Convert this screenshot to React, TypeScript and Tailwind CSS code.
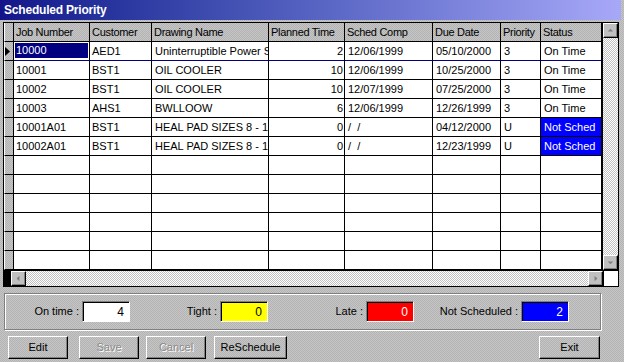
const dither =
  "bg-[image:repeating-conic-gradient(#c6c6c6_0_25%,#b3b3b3_0_50%)] bg-size-[2px_2px]";
const track =
  "bg-[image:repeating-conic-gradient(#c0c0c0_0_25%,#ffffff_0_50%)] bg-size-[2px_2px]";

const widths = [
  "w-[10px]",
  "w-[76px]",
  "w-[62px]",
  "w-[117px]",
  "w-[76px]",
  "w-[88px]",
  "w-[68px]",
  "w-[40px]",
  "w-[61px]",
];

const headers = [
  "",
  "Job Number",
  "Customer",
  "Drawing Name",
  "Planned Time",
  "Sched Comp",
  "Due Date",
  "Priority",
  "Status",
];

type Row = {
  job: string;
  cust: string;
  name: string;
  time: string;
  comp: string;
  due: string;
  prio: string;
  status: string;
};

const rows: Row[] = [
  { job: "10000", cust: "AED1", name: "Uninterruptible Power Supply", time: "2", comp: "12/06/1999", due: "05/10/2000", prio: "3", status: "On Time" },
  { job: "10001", cust: "BST1", name: "OIL COOLER", time: "10", comp: "12/06/1999", due: "10/25/2000", prio: "3", status: "On Time" },
  { job: "10002", cust: "BST1", name: "OIL COOLER", time: "10", comp: "12/07/1999", due: "07/25/2000", prio: "3", status: "On Time" },
  { job: "10003", cust: "AHS1", name: "BWLLOOW", time: "6", comp: "12/06/1999", due: "12/26/1999", prio: "3", status: "On Time" },
  { job: "10001A01", cust: "BST1", name: "HEAL PAD SIZES 8 - 12", time: "0", comp: "/  /", due: "04/12/2000", prio: "U", status: "Not Sched" },
  { job: "10002A01", cust: "BST1", name: "HEAL PAD SIZES 8 - 12", time: "0", comp: "/  /", due: "12/23/1999", prio: "U", status: "Not Sched" },
];

function ScrollBtn({ dir }: { dir: "up" | "down" | "left" | "right" }) {
  const pts = {
    up: "4,8 7,5 10,8",
    down: "4,6 7,9 10,6",
    left: "8,4 5,7 8,10",
    right: "6,4 9,7 6,10",
  }[dir];
  return (
    <div className="h-[15px] w-[15px] shrink-0 border-t border-l border-white border-r-black border-b-black border-r border-b bg-[#c0c0c0] shadow-[inset_-1px_-1px_0_#808080]">
      <svg width="13" height="13" viewBox="0 0 14 14">
        <polygon points={pts} fill="#808080" />
      </svg>
    </div>
  );
}

function Btn({ label, w, disabled }: { label: string; w: string; disabled?: boolean }) {
  return (
    <div
      className={`${w} ${dither} flex h-[23px] items-center justify-center border border-t-white border-l-white border-r-black border-b-black shadow-[inset_-1px_-1px_0_#808080] text-[11px] ${
        disabled ? "text-[#8a8a8a] [text-shadow:1px_1px_0_#ffffff]" : "text-black"
      }`}
    >
      {label}
    </div>
  );
}

function Count({ label, lw, value, box }: { label: string; lw: string; value: string; box: string }) {
  return (
    <div className="flex items-center">
      <div className={`${lw} pr-[3px] text-right text-[11px] text-black`}>{label}</div>
      <div
        className={`${box} flex h-[21px] w-[48px] items-center justify-end border border-t-[#808080] border-l-[#808080] border-r-white border-b-white pr-[5px] text-[12px] shadow-[inset_1px_1px_0_#000]`}
      >
        {value}
      </div>
    </div>
  );
}

export default function App() {
  const empty = Array.from({ length: 6 });
  return (
    <div className={`h-[362px] w-[624px] overflow-hidden font-['Liberation_Sans',Arial,sans-serif] ${dither}`}>
      <div className="flex h-[20px] w-[621px] items-center bg-linear-to-r from-[#14148a] to-[#a8a8f8] pl-[4px] text-[12px] font-bold tracking-[-0.2px] text-white">
        Scheduled Priority
      </div>

      <div className="ml-[3px] mt-[2px] flex w-[616px] flex-col border border-black">
        <div className="flex">
          <div className="flex w-[598px] flex-col">
            <div className="flex h-[19px]">
              {headers.map((h, i) => (
                <div
                  key={i}
                  className={`${widths[i]} ${dither} ${
                    i === 0 ? "border-l border-l-white" : ""
                  } flex items-center overflow-hidden whitespace-nowrap border-r border-b border-r-black border-b-black pl-[2px] text-[11px] tracking-[-0.3px]`}
                >
                  {h}
                </div>
              ))}
            </div>
            {rows.map((r, ri) => {
              const sel = ri === 0;
              const line = sel ? "border-b-[#000080]" : "border-b-black";
              const cell = `flex items-center overflow-hidden whitespace-nowrap border-r border-b border-r-black ${line} text-[11px] bg-white`;
              return (
                <div key={ri} className="flex h-[19px]">
                  <div className={`${widths[0]} ${dither} flex items-center border-l border-l-white border-r border-b border-r-black border-b-black`}>
                    {sel && (
                      <svg width="5" height="9" viewBox="0 0 5 9">
                        <polygon points="0,0 5,4.5 0,9" fill="#000" />
                      </svg>
                    )}
                  </div>
                  <div className={`${widths[1]} ${cell} p-px`}>
                    <div
                      className={`flex h-full w-full items-center pl-[1px] ${
                        sel ? "bg-[#000080] text-white border-b border-b-white" : ""
                      }`}
                    >
                      {r.job}
                    </div>
                  </div>
                  <div className={`${widths[2]} ${cell} pl-[2px]`}>{r.cust}</div>
                  <div className={`${widths[3]} ${cell} pl-[3px]`}>{r.name}</div>
                  <div className={`${widths[4]} ${cell} justify-end pr-[1px]`}>{r.time}</div>
                  <div className={`${widths[5]} ${cell} whitespace-pre pl-[3px]`}>{r.comp}</div>
                  <div className={`${widths[6]} ${cell} pl-[3px]`}>{r.due}</div>
                  <div className={`${widths[7]} ${cell} pl-[3px]`}>{r.prio}</div>
                  <div className={`${widths[8]} ${cell} p-0`}>
                    <div
                      className={`flex h-full w-full items-center pl-[3px] ${
                        r.status === "Not Sched" ? "bg-[#0000ff] text-white" : ""
                      }`}
                    >
                      {r.status}
                    </div>
                  </div>
                </div>
              );
            })}
            {empty.map((_, ri) => (
              <div key={"e" + ri} className="flex h-[19px]">
                {widths.map((w, i) => (
                  <div
                    key={i}
                    className={`${w} ${
                      i === 0 ? `${dither} border-l border-l-white` : "bg-white"
                    } border-r border-b border-r-black border-b-black`}
                  />
                ))}
              </div>
            ))}
          </div>
          <div className={`flex w-[16px] flex-col border-l border-l-black ${track}`}>
            <ScrollBtn dir="up" />
            <div className="flex-1" />
            <ScrollBtn dir="down" />
          </div>
        </div>
        <div className={`flex h-[16px] items-stretch border-t border-t-black ${track}`}>
          <div className="w-[7px] bg-black" />
          <ScrollBtn dir="left" />
          <div className="flex-1" />
          <ScrollBtn dir="right" />
          <div className="w-[15px] border-l border-l-black bg-white" />
        </div>
      </div>

      <div className="ml-[4px] mt-[6px] flex h-[37px] w-[597px] items-center border border-[#808080] shadow-[inset_1px_1px_0_#ffffff,1px_1px_0_#ffffff]">
        <Count label="On time :" lw="w-[77px]" value="4" box="bg-white text-black" />
        <Count label="Tight :" lw="w-[90px]" value="0" box="bg-[#ffff00] text-black" />
        <Count label="Late :" lw="w-[98px]" value="0" box="bg-[#ff0000] text-white" />
        <Count label="Not Scheduled :" lw="w-[107px]" value="2" box="bg-[#0000ff] text-white" />
      </div>

      <div className="mt-[6px] flex">
        <div className="ml-[8px]">
          <Btn label="Edit" w="w-[60px]" />
        </div>
        <div className="ml-[11px]">
          <Btn label="Save" w="w-[60px]" disabled />
        </div>
        <div className="ml-[7px]">
          <Btn label="Cancel" w="w-[60px]" disabled />
        </div>
        <div className="ml-[8px]">
          <Btn label="ReSchedule" w="w-[73px]" />
        </div>
        <div className="ml-[252px]">
          <Btn label="Exit" w="w-[61px]" />
        </div>
      </div>
    </div>
  );
}
